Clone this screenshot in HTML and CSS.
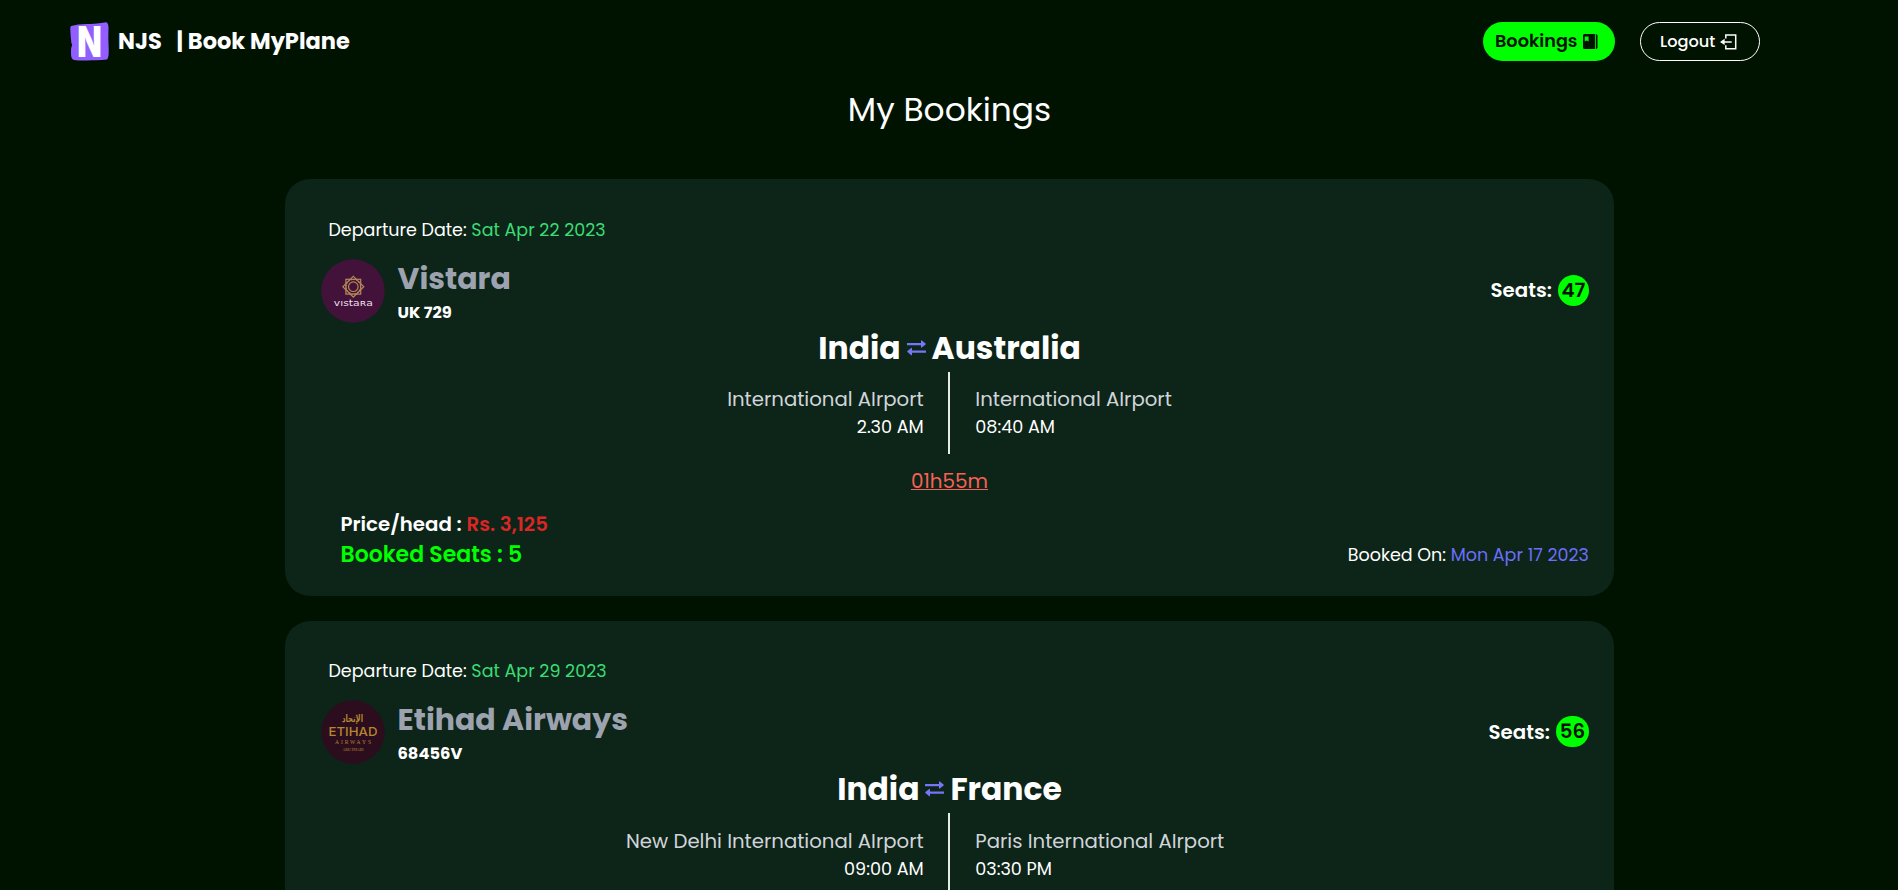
FILE: index.html
```html
<!DOCTYPE html>
<html lang="en">
<head>
<meta charset="utf-8">
<title>Book MyPlane</title>
<link rel="stylesheet" href="styles.css">
</head>
<body>
<header class="nav">
  <a class="brand">
    <svg class="brand-logo" viewBox="0 0 39 39">
      <path fill="#915eff" d="M1 4Q9 1.5 20 2Q30 1.5 36 .3Q38.500 1 38.500 6Q38 16 38.700 27Q39 36 37 37.500Q31 38.500 22 38.200Q12 39 4 38Q.8 37 1 31Q.6 27 1.600 24.500Q3 23 1.400 21Q.6 15 .3 8Q0 5 1 4Z"/>
      <text class="brand-letter" transform="translate(19.500 35) scale(.76 1)" text-anchor="middle">N</text>
    </svg>
    <span class="brand-name">NJS</span>
    <span class="brand-title">| Book MyPlane</span>
  </a>
  <nav class="actions">
    <a class="btn btn-bookings"><span>Bookings</span>
      <svg width="15" height="15" viewBox="0 0 15 15"><path fill="#001200" fill-rule="evenodd" d="M1.500 0H12V15H1.500Q0 15 0 13.500V1.500Q0 0 1.500 0ZM1.800 2.600V7.600L3.700 6.400L5.600 7.600V2.600ZM12.800 0Q14.500 0 14.500 1.500V13.500Q14.500 15 12.800 15Z"/></svg>
    </a>
    <a class="btn btn-logout"><span>Logout</span>
      <svg width="17" height="16" viewBox="0 0 17 16" fill="none" stroke="#fff" stroke-width="1.500"><path d="M5.800 4.500V1H15.700V14.700H5.800V11.200M3 7.900H11.700"/><path fill="#fff" stroke="none" d="M0 7.900L4.600 4.700V11.100Z"/></svg>
    </a>
  </nav>
</header>

<main>
  <h1 class="title">My Bookings</h1>

  <article class="card">
    <p class="departure">Departure Date: <span class="green">Sat Apr 22 2023</span></p>
    <div class="airline">
      <svg class="airline-logo" viewBox="0 0 64 64">
        <circle cx="32" cy="32" r="31.700" fill="#42123b"/>
        <g fill="none" stroke="#b58a55" stroke-width="1.200">
          <rect x="24.900" y="20.300" width="14.800" height="14.800"/>
          <rect x="24.900" y="20.300" width="14.800" height="14.800" transform="rotate(45 32.300 27.700)"/>
          <circle cx="32.300" cy="27.700" r="4.800"/>
          <circle cx="32.300" cy="27.700" r="7.300" stroke-dasharray="1.800 1.070"/>
        </g>
        <text x="32.300" y="47" class="vistara-text" text-anchor="middle" textLength="39" lengthAdjust="spacingAndGlyphs">vıstaʀa</text>
      </svg>
      <div class="airline-info">
        <h2 class="airline-name">Vistara</h2>
        <p class="flight-no">UK 729</p>
      </div>
      <div class="seats"><span>Seats:</span><span class="badge">47</span></div>
    </div>
    <div class="route">
      <span class="city">India</span>
      <svg class="swap" width="19" height="16" viewBox="0 0 19 16"><path fill="#7376f5" d="M0 2.900H14V.8Q14 0 14.800.4L18.600 3.600Q19 4 18.600 4.400L14.800 7.600Q14 8 14 7.200V5.200H0ZM19 10.400H5V8.300Q5 7.500 4.200 7.900L.4 11.100Q0 11.500.4 11.900L4.200 15.200Q5 15.600 5 14.800V12.700H19Z"/></svg>
      <span class="city">Australia</span>
    </div>
    <div class="legs">
      <div class="leg leg-from"><p class="airport">International AIrport</p><p class="time">2.30 AM</p></div>
      <div class="leg"><p class="airport">International AIrport</p><p class="time">08:40 AM</p></div>
    </div>
    <p class="duration">01h55m</p>
    <p class="price">Price/head : <span class="red">Rs. 3,125</span></p>
    <div class="footer">
      <p class="booked-seats">Booked Seats : 5</p>
      <p>Booked On: <span class="violet">Mon Apr 17 2023</span></p>
    </div>
  </article>

  <article class="card">
    <p class="departure">Departure Date: <span class="green">Sat Apr 29 2023</span></p>
    <div class="airline">
      <svg class="airline-logo" viewBox="0 0 64 64">
        <circle cx="32" cy="32" r="31.700" fill="#2b0d1e"/>
        <g fill="#b5862f" text-anchor="middle">
          <text x="31.500" y="22" class="etihad-arabic" textLength="21" lengthAdjust="spacingAndGlyphs">الإتحاد</text>
          <text x="32" y="36.300" class="etihad-name" textLength="49" lengthAdjust="spacingAndGlyphs">ETIHAD</text>
          <text x="32" y="43.500" class="etihad-small" textLength="36">AIRWAYS</text>
          <text x="32" y="51.300" class="etihad-tiny" textLength="21">ABU DHABI</text>
        </g>
      </svg>
      <div class="airline-info">
        <h2 class="airline-name">Etihad Airways</h2>
        <p class="flight-no">68456V</p>
      </div>
      <div class="seats"><span>Seats:</span><span class="badge badge-wide">56</span></div>
    </div>
    <div class="route">
      <span class="city">India</span>
      <svg class="swap" width="19" height="16" viewBox="0 0 19 16"><path fill="#7376f5" d="M0 2.900H14V.8Q14 0 14.800.4L18.600 3.600Q19 4 18.600 4.400L14.800 7.600Q14 8 14 7.200V5.200H0ZM19 10.400H5V8.300Q5 7.500 4.200 7.900L.4 11.100Q0 11.500.4 11.900L4.200 15.200Q5 15.600 5 14.800V12.700H19Z"/></svg>
      <span class="city">France</span>
    </div>
    <div class="legs">
      <div class="leg leg-from"><p class="airport">New Delhi International AIrport</p><p class="time">09:00 AM</p></div>
      <div class="leg"><p class="airport">Paris International AIrport</p><p class="time">03:30 PM</p></div>
    </div>
  </article>
</main>
</body>
</html>
```
FILE: styles.css
```css
* { box-sizing: border-box; margin: 0; padding: 0; }

html, body { height: 100%; overflow: hidden; }

body {
  background: #001200;
  color: #fff;
  font-family: Poppins, Inter, "Open Sans", sans-serif;
  font-size: 17.5px;
}

.nav {
  display: flex;
  justify-content: space-between;
  align-items: center;
  height: 83px;
  padding: 0 138px 0 70px;
}

.brand { display: flex; align-items: center; font-size: 22.5px; font-weight: 700; }
.brand-logo { width: 39px; height: 39px; margin-right: 9px; overflow: visible; }
.brand-letter { font: 900 42px Inter, sans-serif; fill: #fff; }
.brand-name { width: 58.500px; }
.brand-name, .brand-title { padding-bottom: 2px; }

.actions { display: flex; gap: 25px; }
.btn { display: flex; align-items: center; height: 39px; border-radius: 20px; }
.btn-bookings {
  width: 132px;
  padding-left: 12px;
  gap: 5.500px;
  background: #0f0;
  color: #001200;
  font-size: 17.700px;
  font-weight: 600;
}
.btn-bookings span { padding-bottom: 1.500px; }
.btn-logout {
  width: 120px;
  padding-left: 19px;
  gap: 5px;
  border: 1px solid #fff;
  font-size: 16.200px;
  font-weight: 500;
}

.title {
  height: 96.400px;
  padding: 2.500px 0 0 1px;
  text-align: center;
  font-size: 32.900px;
  font-weight: 400;
  line-height: 48px;
}

.card {
  width: 1329px;
  height: 417px;
  margin: 0 auto 24.200px;
  padding: 37.800px 24.600px 0 36.500px;
  border-radius: 25px;
  background: #0d2418;
}

.departure { margin-bottom: 15px; padding-left: 7.500px; line-height: 27px; }
.green { color: #3bdc74; }
.violet { color: #6a6ffb; }
.red { color: #dc2626; }

.airline { display: flex; align-items: flex-start; height: 67px; }
.airline-logo { width: 64px; height: 64px; margin-right: 12.500px; }
.airline-name { color: #9ca3af; font-size: 30px; font-weight: 700; line-height: 39px; }
.flight-no { padding-top: .4px; font-size: 16.300px; font-weight: 700; line-height: 28px; }

.seats { display: flex; align-items: center; gap: 6px; height: 62.500px; margin-left: auto; font-size: 19.800px; font-weight: 600; }
.badge {
  width: 31px;
  height: 31px;
  border-radius: 16px;
  background: #0f0;
  color: #001200;
  line-height: 31px;
  text-align: center;
}
.badge-wide { width: 33px; }

/* Centred rows cancel the card's uneven side padding. */
.route, .legs, .duration { margin-left: -36.500px; margin-right: -24.600px; }

.route { display: flex; justify-content: center; align-items: center; height: 44px; margin-bottom: 2px; padding-left: 1px; font-size: 31.400px; font-weight: 700; }
.swap { margin: 0 6px; }

.legs { display: grid; grid-template-columns: 1fr 1fr; height: 82px; }
.leg { padding: 12.200px 0 0 25.300px; border-left: 1px solid #e5ece8; }
.leg-from { padding: 12.200px 24.300px 0 0; border-left: 0; border-right: 1px solid #e5ece8; text-align: right; }
.airport { color: #d1d5db; font-size: 19.700px; line-height: 30px; }
.time { font-size: 17.600px; line-height: 27.600px; }

.duration { margin-top: 12.200px; padding-left: 1px; text-align: center; color: #f96156; font-size: 19.900px; line-height: 30px; text-decoration: underline; }

.price { margin-top: 13px; padding-left: 19.500px; font-size: 19.800px; font-weight: 600; line-height: 30px; }

.footer { display: flex; justify-content: space-between; padding: .600px 0 0 19.500px; line-height: 30px; }
.booked-seats { color: #0f0; font-size: 22px; font-weight: 600; }

.vistara-text { font: 8.500px "DejaVu Sans", sans-serif; fill: #eadfe8; }
.etihad-arabic { font: 700 10px "DejaVu Sans", sans-serif; }
.etihad-name { font: 500 12px Inter, sans-serif; }
.etihad-small { font: 5.500px "Liberation Serif", serif; }
.etihad-tiny { font: 4px "Liberation Serif", serif; }
```
